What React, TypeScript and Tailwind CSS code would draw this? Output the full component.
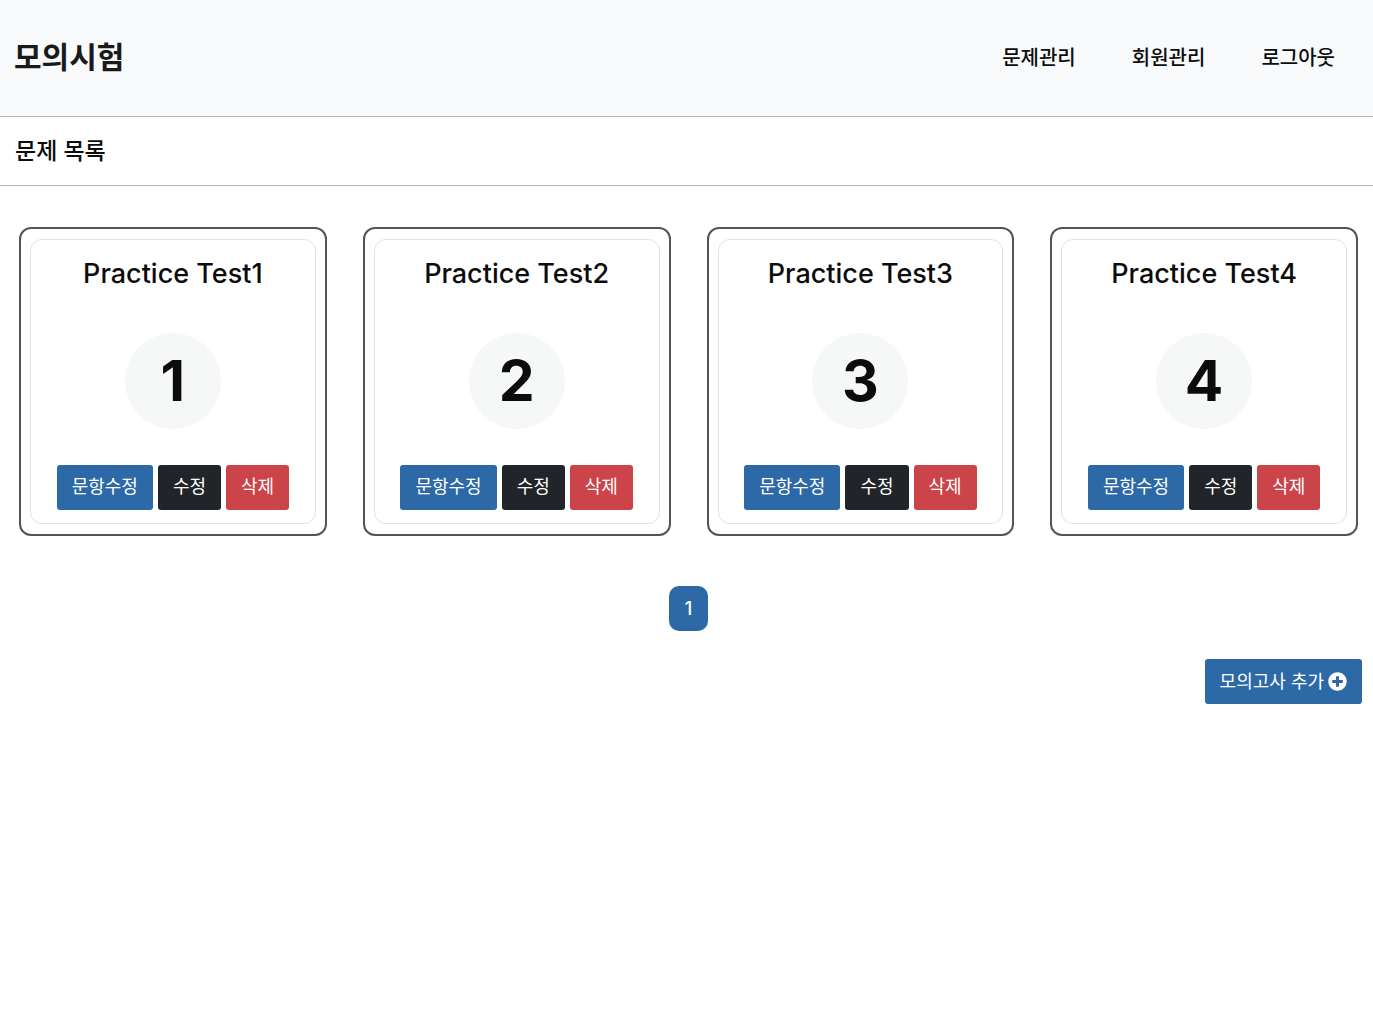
import { FaPlusCircle } from "react-icons/fa";

const tests = [
  { id: 1, title: "Practice Test1" },
  { id: 2, title: "Practice Test2" },
  { id: 3, title: "Practice Test3" },
  { id: 4, title: "Practice Test4" },
];

const menus = ["문제관리", "회원관리", "로그아웃"];

export default function App() {
  return (
    <div className="min-h-screen bg-white text-[#0c0c0c] font-['Inter','Noto_Sans_CJK_KR',sans-serif]">
      <header className="flex items-center justify-between h-[117px] pl-[14px] pr-[10px] bg-[#f8fafc] border-b border-[#b4b4b4]">
        <h1 className="pb-[2px] text-[30px] leading-[40px] font-bold text-[#1a1a1a]">
          <a href="#">모의시험</a>
        </h1>
        <nav className="flex">
          {menus.map((menu) => (
            <a key={menu} href="#" className="px-7 text-[20px] leading-7 font-medium">{menu}</a>
          ))}
        </nav>
      </header>

      <div className="flex items-center h-[69px] px-[15px] border-b border-[#b4b4b4]">
        <h2 className="text-[23px] leading-8 font-medium">문제 목록</h2>
      </div>

      <main>
        <div className="grid grid-cols-4 gap-9 pt-[41px] pl-[19px] pr-[15px]">
          {tests.map((test) => (
            <div key={test.id} className="border-2 border-[#555555] rounded-xl px-[9px] py-[10px]">
              <div className="flex flex-col items-center border border-[#dee2e6] rounded-xl pt-4 pb-[13px]">
                <h3 className="text-[27px] leading-9 font-medium">{test.title}</h3>
                <div className="flex items-center justify-center w-24 h-24 pb-[2px] mt-[41px] rounded-full bg-[#f6f8f8] text-[57px] leading-none font-bold">
                  {test.id}
                </div>
                <div className="flex gap-[5px] mt-9 text-[18px] text-white">
                  <button className="h-[45px] px-[15px] pb-[2px] rounded-[3px] bg-[#2d69a7]">문항수정</button>
                  <button className="h-[45px] px-[15px] pb-[2px] rounded-[3px] bg-[#212529]">수정</button>
                  <button className="h-[45px] px-[15px] pb-[2px] rounded-[3px] bg-[#cb444a]">삭제</button>
                </div>
              </div>
            </div>
          ))}
        </div>

        <div className="flex justify-center mt-[50px] pl-1">
          <button className="w-[39px] h-[45px] rounded-[10px] bg-[#2d69a7] text-[18px] font-medium text-white">1</button>
        </div>

        <div className="flex justify-end mt-7 pr-[11px]">
          <button className="flex items-center gap-1 h-[45px] px-[15px] rounded-[3px] bg-[#2d69a7] text-[18px] text-white">
            모의고사 추가 <FaPlusCircle className="w-[19px] h-[19px]" />
          </button>
        </div>
      </main>
    </div>
  )
}
